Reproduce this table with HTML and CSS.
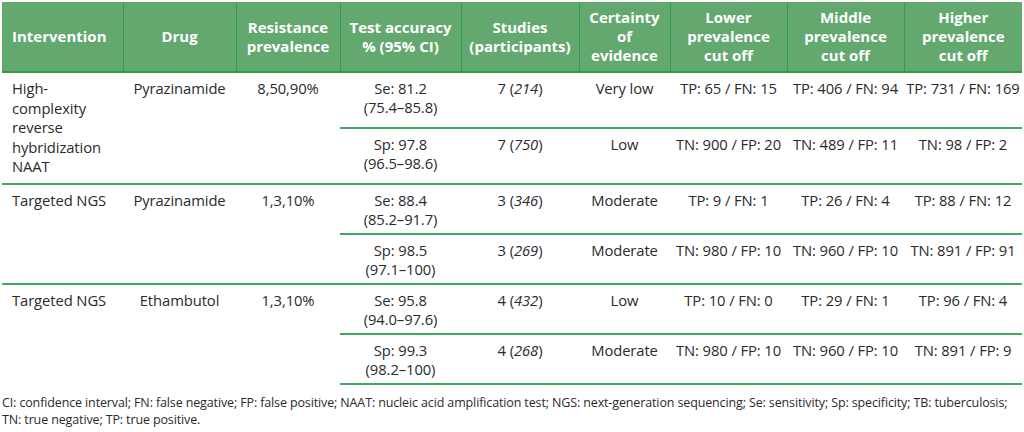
FILE: index.html
```html
<!DOCTYPE html>
<html>
<head>
<meta charset="utf-8">
<link rel="stylesheet" href="styles.css">
</head>
<body>
<div class="page">
<table class="data">
  <colgroup>
    <col class="c1"><col class="c2"><col class="c3"><col class="c4"><col class="c5"><col class="c6"><col class="c7"><col class="c8"><col class="c9">
  </colgroup>
  <thead>
    <tr>
      <th class="left">Intervention</th>
      <th>Drug</th>
      <th>Resistance<br>prevalence</th>
      <th>Test accuracy<br>% (95% CI)</th>
      <th>Studies<br>(participants)</th>
      <th>Certainty<br>of<br>evidence</th>
      <th>Lower<br>prevalence<br>cut off</th>
      <th>Middle<br>prevalence<br>cut off</th>
      <th>Higher<br>prevalence<br>cut off</th>
    </tr>
  </thead>
  <tbody>
    <tr class="group">
      <td class="left tall" rowspan="2">High-<br>complexity<br>reverse<br>hybridization<br>NAAT</td>
      <td rowspan="2">Pyrazinamide</td>
      <td rowspan="2">8,50,90%</td>
      <td>Se: 81.2<br>(75.4–85.8)</td>
      <td>7 (<i>214</i>)</td>
      <td>Very low</td>
      <td>TP: 65 / FN: 15</td>
      <td>TP: 406 / FN: 94</td>
      <td>TP: 731 / FN: 169</td>
    </tr>
    <tr class="sub">
      <td>Sp: 97.8<br>(96.5–98.6)</td>
      <td>7 (<i>750</i>)</td>
      <td>Low</td>
      <td>TN: 900 / FP: 20</td>
      <td>TN: 489 / FP: 11</td>
      <td>TN: 98 / FP: 2</td>
    </tr>
    <tr class="group">
      <td class="left" rowspan="2">Targeted NGS</td>
      <td rowspan="2">Pyrazinamide</td>
      <td rowspan="2">1,3,10%</td>
      <td>Se: 88.4<br>(85.2–91.7)</td>
      <td>3 (<i>346</i>)</td>
      <td>Moderate</td>
      <td>TP: 9 / FN: 1</td>
      <td>TP: 26 / FN: 4</td>
      <td>TP: 88 / FN: 12</td>
    </tr>
    <tr class="sub">
      <td>Sp: 98.5<br>(97.1–100)</td>
      <td>3 (<i>269</i>)</td>
      <td>Moderate</td>
      <td>TN: 980 / FP: 10</td>
      <td>TN: 960 / FP: 10</td>
      <td>TN: 891 / FP: 91</td>
    </tr>
    <tr class="group">
      <td class="left" rowspan="2">Targeted NGS</td>
      <td rowspan="2">Ethambutol</td>
      <td rowspan="2">1,3,10%</td>
      <td>Se: 95.8<br>(94.0–97.6)</td>
      <td>4 (<i>432</i>)</td>
      <td>Low</td>
      <td>TP: 10 / FN: 0</td>
      <td>TP: 29 / FN: 1</td>
      <td>TP: 96 / FN: 4</td>
    </tr>
    <tr class="sub last">
      <td>Sp: 99.3<br>(98.2–100)</td>
      <td>4 (<i>268</i>)</td>
      <td>Moderate</td>
      <td>TN: 980 / FP: 10</td>
      <td>TN: 960 / FP: 10</td>
      <td>TN: 891 / FP: 9</td>
    </tr>
  </tbody>
</table>
<p class="note">CI: confidence interval; FN: false negative; FP: false positive; NAAT: nucleic acid amplification test; NGS: next-generation sequencing; Se: sensitivity; Sp: specificity; TB: tuberculosis; TN: true negative; TP: true positive.</p>
</div>
</body>
</html>
```

FILE: styles.css
```css
html, body {
  margin: 0;
  padding: 0;
  background: #ffffff;
}

.page {
  padding: 2px 2px 0 2px;
  font-family: "Open Sans", "Noto Sans", sans-serif;
  color: #2b2b2b;
}

.data {
  width: 1020px;
  border-collapse: collapse;
  table-layout: fixed;
}

.c1 { width: 121px; }
.c2 { width: 113px; }
.c3 { width: 104px; }
.c4 { width: 121px; }
.c5 { width: 118px; }
.c6 { width: 91px; }
.c7 { width: 117px; }
.c8 { width: 117px; }
.c9 { width: 118px; }

.data th {
  background: #63a86e;
  color: #ffffff;
  font-weight: 700;
  font-size: 15px;
  line-height: 19px;
  padding: 6px 2px 6px 2px;
  text-align: center;
  vertical-align: middle;
  white-space: nowrap;
  border-left: 1px solid #2f9c4b;
  border-bottom: 2px solid #2f9c4b;
}

.data th:first-child {
  border-left: none;
}

.data td {
  font-size: 14.8px;
  letter-spacing: -0.1px;
  line-height: 19px;
  padding: 6px 2px 4px 2px;
  text-align: center;
  vertical-align: top;
  white-space: nowrap;
}

.data .left {
  text-align: left;
  padding-left: 10px;
}

.data td.tall {
  line-height: 19.5px;
  padding-bottom: 6px;
}

.data tr.group td,
.data tr.sub td {
  border-top: 2px solid #3daa64;
}

.data tr.last td {
  border-bottom: 2px solid #3daa64;
}

.note {
  margin: 9px 0 0 0;
  font-size: 12.5px;
  letter-spacing: -0.13px;
  line-height: 17px;
  color: #2b2b2b;
}
```
